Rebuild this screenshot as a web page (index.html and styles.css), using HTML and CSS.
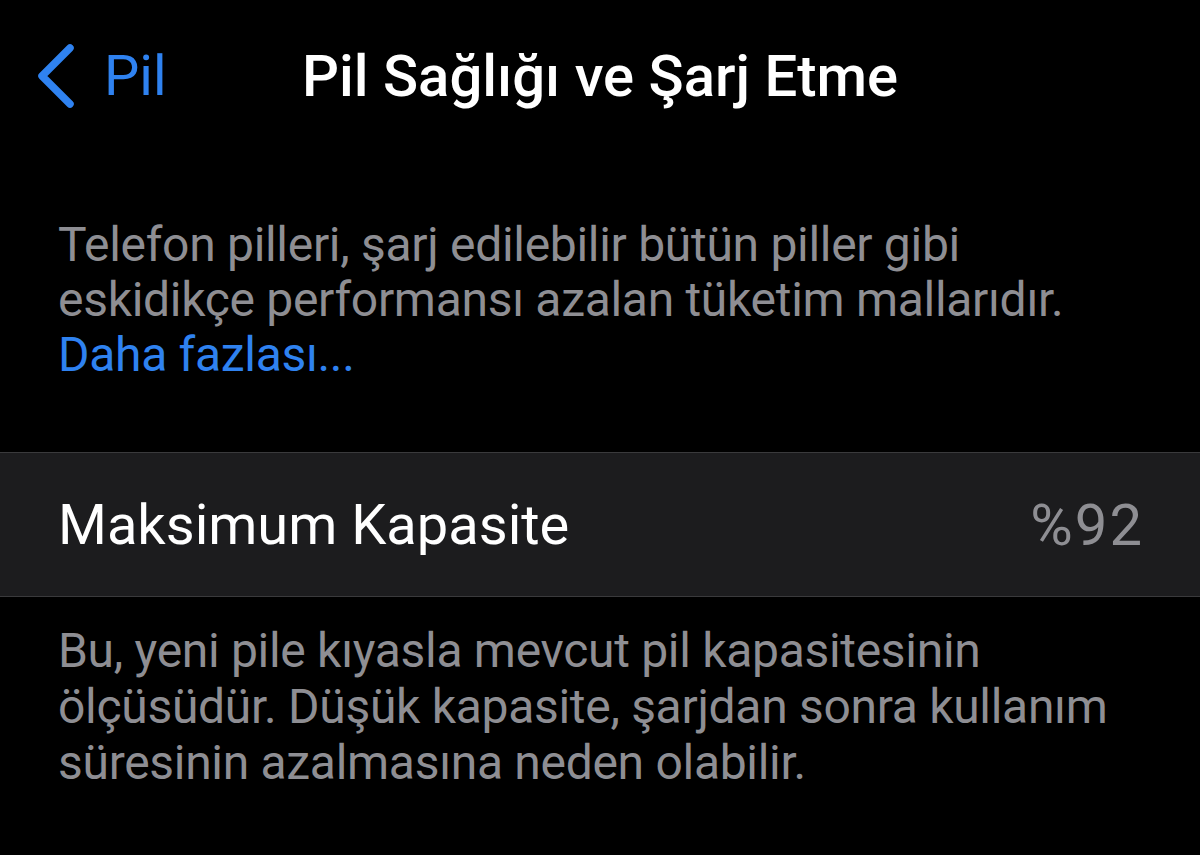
FILE: index.html
```html
<!DOCTYPE html>
<html lang="tr">
<head>
<meta charset="utf-8">
<link rel="stylesheet" href="styles.css">
</head>
<body>
<div class="screen">
  <header class="nav">
    <a class="back">
      <svg class="chev" viewBox="0 0 40 64" width="40" height="64"><path d="M34 4 L6 32 L34 60" fill="none" stroke="#2f82f0" stroke-width="7.5" stroke-linecap="round" stroke-linejoin="round"/></svg>
      <span class="back-label">Pil</span>
    </a>
    <h1 class="title">Pil Sağlığı ve Şarj Etme</h1>
  </header>
  <p class="desc">Telefon pilleri, şarj edilebilir bütün piller gibi<br>eskidikçe performansı azalan tüketim mallarıdır.<br><a class="more">Daha fazlası...</a></p>
  <div class="row">
    <span class="row-label">Maksimum Kapasite</span>
    <span class="row-value">%92</span>
  </div>
  <p class="foot">Bu, yeni pile kıyasla mevcut pil kapasitesinin<br>ölçüsüdür. Düşük kapasite, şarjdan sonra kullanım<br>süresinin azalmasına neden olabilir.</p>
</div>
</body>
</html>
```
FILE: styles.css
```css
html, body { margin: 0; padding: 0; background: #000; }
.screen { width: 1200px; height: 855px; background: #000; font-family: Roboto, "Noto Sans", sans-serif; overflow: hidden; }
.nav { height: 152px; display: flex; align-items: center; position: relative; }
.back { display: flex; align-items: center; padding-left: 36px; color: #2f82f0; }
.chev { display: block; }
.back-label { font-size: 56px; margin-left: 28px; line-height: 1; }
.title { position: absolute; left: 302px; top: 0; height: 152px; display: flex; align-items: center; margin: 0; color: #fff; font-size: 58px; font-weight: 500; }
.desc { margin: 65px 0 0; padding: 0 58px; color: #8e8e93; font-size: 48px; letter-spacing: -0.3px; line-height: 55px; white-space: nowrap; }
.more { color: #2f82f0; }
.row { margin-top: 70px; height: 143px; background: #1c1c1e; border-top: 1px solid #3a3a3c; border-bottom: 1px solid #3a3a3c; display: flex; align-items: center; justify-content: space-between; padding: 0 58px; }
.row-label { color: #fff; font-size: 56px; }
.row-value { color: #8e8e93; font-size: 58px; letter-spacing: 2px; margin-right: -2px; }
.foot { margin: 26px 0 0; padding: 0 58px; color: #8e8e93; font-size: 48px; letter-spacing: -0.3px; line-height: 56px; white-space: nowrap; }
```
